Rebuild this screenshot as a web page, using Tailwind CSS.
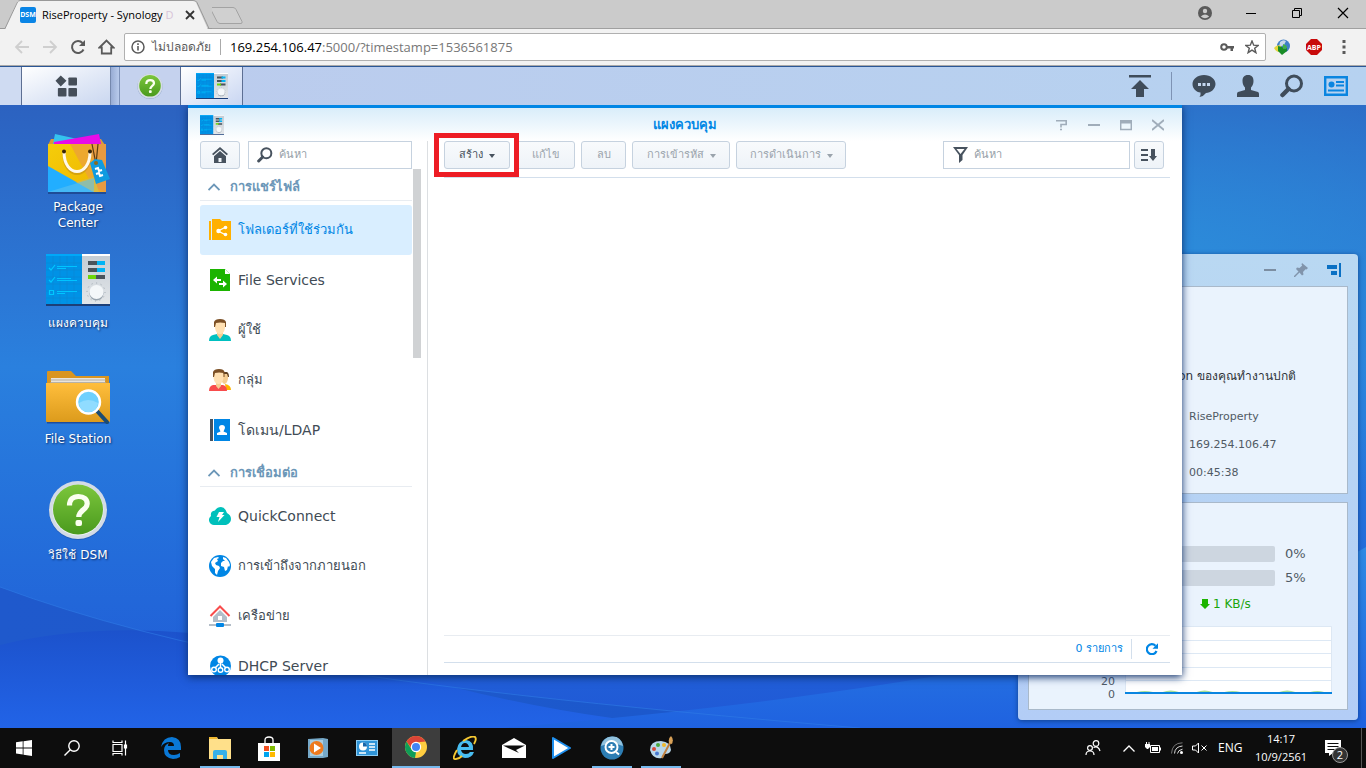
<!DOCTYPE html>
<html lang="th">
<head>
  <meta charset="UTF-8" />
  <title>RiseProperty - Synology DiskStation</title>
  <meta name="viewport" content="width=device-width, initial-scale=1.0" />
  <script src="https://cdn.jsdelivr.net/npm/@tailwindcss/browser@4"></script>
</head>
<body class="flex flex-col h-screen overflow-hidden font-['DejaVu_Sans',sans-serif] text-[#414b55]">

  <!-- Shared icons -->
  <svg class="absolute w-0 h-0">
    <defs>
      <linearGradient id="gGreen" x1="0" y1="0" x2="0" y2="1"><stop offset="0" stop-color="#7cc63c" /><stop offset="1" stop-color="#4a9a1e" /></linearGradient>
      <linearGradient id="gFolder" x1="0" y1="0" x2="0" y2="1"><stop offset="0" stop-color="#ffbe3c" /><stop offset="1" stop-color="#dc9b1c" /></linearGradient>
      <linearGradient id="gPanel" x1="0" y1="0" x2="0" y2="1"><stop offset="0" stop-color="#c3ccd4" /><stop offset="1" stop-color="#e3e6e9" /></linearGradient>
      <linearGradient id="gBag" x1="0" y1="0" x2="1" y2="1"><stop offset="0" stop-color="#f5cd0a" /><stop offset="1" stop-color="#eeb500" /></linearGradient>
    </defs>
    <symbol id="control" viewBox="0 0 64 52">
      <path d="M0 50h64v2H0z" fill="#1c3f78" />
      <path d="M0 0h36v50H0z" fill="#0092e6" />
      <path d="M0 0h36v2H0z" fill="#00a8f8" />
      <path d="M7 2v48M14 2v48M21 2v48M28 2v48M0 9h36M0 16h36M0 23h36M0 30h36M0 37h36M0 44h36" stroke="#0a86d4" stroke-width=".6" />
      <path d="M36 0h28v50H36z" fill="url(#gPanel)" />
      <path d="M36 0h28v2H36z" fill="#fff" />
      <path d="M3 14l2 2 4-5M3 26l2 2 4-5M3.500 36.500h4v4h-4z" stroke="#00c8ff" stroke-width="1.200" fill="none" />
      <path d="M11 12.500h20M11 14.500h9M11 24.500h14M11 26.500h20M11 37.500h20M11 39.500h8" stroke="#00c4ff" stroke-width="1.100" />
      <path d="M42 7h12v4H42zM42 14h12v4H42zM48 21h11v4H48z" fill="#4a535b" />
      <path d="M51 7h8v4h-8zM51 14h8v4h-8z" fill="#00b4f5" /><path d="M42 21h8v4h-8z" fill="#6ed60a" />
      <circle cx="50" cy="38" r="9" fill="none" stroke="#9aa5ae" stroke-width="1" stroke-dasharray="1 3.700" />
      <circle cx="50.500" cy="39.500" r="7" fill="#97a3ad" /><circle cx="50.500" cy="38" r="7" fill="#f4f7f9" />
    </symbol>
    <symbol id="help" viewBox="0 0 60 60">
      <circle cx="30" cy="31" r="29" fill="#1b458f" opacity=".4" />
      <circle cx="30" cy="30" r="29" fill="#d3dbe6" /><circle cx="30" cy="30" r="25.500" fill="#eef3f3" />
      <circle cx="30" cy="29.500" r="25" fill="url(#gGreen)" />
      <path d="M21.500 25.500c0-6 3.500-9 9-9s8.700 3 8.700 7.200c0 6.300-8.400 6.100-8.400 13.300" fill="none" stroke="#fbfff0" stroke-width="5.200" />
      <rect x="27.500" y="40" width="6.500" height="6" rx="2" fill="#fbfff0" />
    </symbol>
    <symbol id="mag" viewBox="0 0 24 24">
      <circle cx="14" cy="9.500" r="7.500" fill="none" stroke="currentColor" stroke-width="3" /><path d="M8.500 15l-6 6" stroke="currentColor" stroke-width="4.500" stroke-linecap="round" />
    </symbol>
    <symbol id="chev" viewBox="0 0 12 8"><path d="M0.500 7L6 1.500 11.500 7" fill="none" stroke="currentColor" stroke-width="1.800" /></symbol>
    <symbol id="caret" viewBox="0 0 6 4"><path d="M0 0h6L3 4z" fill="currentColor" /></symbol>
  </svg>

  <!-- Browser tab strip -->
  <header class="shrink-0 bg-[#f2f2f2] font-['Open_Sans',sans-serif] text-black">
    <div class="flex h-[29px] bg-[#cbcbcb] border-b border-[#a0a0a0]">
      <div class="relative w-[212px] h-[29px] flex items-center pl-5 pr-4 gap-[6px]">
        <svg class="absolute inset-0 w-full h-full" viewBox="0 0 212 29"><path d="M0 29.500h5L17 2q1-1.500 3-1.500h172q3 0 4 2L208 29.500z" fill="#f2f2f2" /><path d="M0 28.500h5L17.500 2q1-1.500 3-1.500H193q3 0 4 2l12 26h3" fill="none" stroke="#999" /></svg>
        <span class="relative w-4 h-4 rounded-xs bg-[#0a85e6] text-white text-[7px] leading-4 font-bold text-center">DSM</span>
        <span class="relative flex-1 whitespace-nowrap text-[11px] leading-4">RiseProperty - Synology <span class="text-[#d8c4d8]">D</span></span>
        <button aria-label="Close tab" class="relative w-3 h-3"><svg viewBox="0 0 12 12"><path d="M2 2l8 8M10 2l-8 8" stroke="#333" stroke-width="1.800" /></svg></button>
      </div>
      <button aria-label="New tab" class="w-9 h-7"><svg viewBox="0 0 36 28"><path d="M-2 7.500h23q2 0 3 2l6 12q.5 2-1 2H8q-2 0-3-2L-2 8z" fill="#d0d0d0" stroke="#a3a3a3" /></svg></button>
      <div class="flex-1"></div>
      <svg class="w-[14px] h-[14px] mt-[6px]" viewBox="0 0 14 14"><circle cx="7" cy="7" r="7" fill="#5a5a5a" /><circle cx="7" cy="5" r="2.200" fill="#cbcbcb" /><path d="M2.800 10.500q4.200-4 8.400 0-4.200 3.500-8.400 0z" fill="#cbcbcb" /></svg>
      <div class="flex ml-4">
        <button aria-label="Minimize" class="w-[46px] h-[26px] flex items-center justify-center"><svg class="w-3 h-3" viewBox="0 0 12 12"><path d="M1 6.500h10" stroke="#000" /></svg></button>
        <button aria-label="Restore" class="w-[46px] h-[26px] flex items-center justify-center"><svg class="w-3 h-3" viewBox="0 0 12 12"><path d="M1.500 3.500h7v7h-7zM3.500 3V1.500h7v7H9" fill="none" stroke="#000" /></svg></button>
        <button aria-label="Close" class="w-[46px] h-[26px] flex items-center justify-center"><svg class="w-3 h-3" viewBox="0 0 12 12"><path d="M1 1l10 10M11 1L1 11" stroke="#000" stroke-width="1.200" /></svg></button>
      </div>
    </div>

    <!-- Address bar -->
    <div class="flex items-center h-[37px] pl-[14px] pr-5 border-b border-[#a9a9a9]">
      <div class="flex items-center gap-3 mr-[9px]">
        <svg class="w-4 h-4" viewBox="0 0 16 16"><path d="M15 8H2M8 2L2 8l6 6" fill="none" stroke="#cfcfcf" stroke-width="1.800" /></svg>
        <svg class="w-4 h-4" viewBox="0 0 16 16"><path d="M1 8h13M8 2l6 6-6 6" fill="none" stroke="#cfcfcf" stroke-width="1.800" /></svg>
        <svg class="w-4 h-4" viewBox="0 0 16 16"><path d="M13.500 10.500A6 6 0 1 1 12.500 4" fill="none" stroke="#5a5a5a" stroke-width="2" /><path d="M15 1v6H9z" fill="#5a5a5a" /></svg>
        <svg class="w-[17px] h-4" viewBox="0 0 17 16"><path d="M1.500 8.500l7-7 7 7h-2.300V14.500H3.800V8.500z" fill="none" stroke="#5a5a5a" stroke-width="1.800" /></svg>
      </div>
      <div class="flex-1 flex items-center h-7 px-[6px] bg-white border border-[#b0b0b0] rounded-xs text-[13px] leading-5">
        <svg class="w-[14px] h-[14px] shrink-0" viewBox="0 0 14 14"><circle cx="7" cy="7" r="6" fill="none" stroke="#5a5a5a" stroke-width="1.500" /><path d="M7 6v4.500M7 3.300V5" stroke="#5a5a5a" stroke-width="1.600" /></svg>
        <span class="ml-[7px] w-[59px] text-[12px] text-[#5a5a5a] whitespace-nowrap">ไม่ปลอดภัย</span>
        <span class="mx-[9px] w-px h-4 bg-[#aaa]"></span>
        <span class="flex-1 text-[#777] whitespace-nowrap"><span class="text-black">169.254.106.47</span>:5000/?timestamp=1536561875</span>
        <svg class="w-[14px] h-3 mr-[11px]" viewBox="0 0 14 12"><path d="M7 5h7v2.500h-1V10h-2.500V7.500H7z" fill="#5a5a5a" /><circle cx="4" cy="6" r="2.800" fill="none" stroke="#5a5a5a" stroke-width="2" /></svg>
        <svg class="w-[14px] h-[14px]" viewBox="0 0 14 14"><path d="M7 1l1.700 4.200 4.500.300-3.500 2.800 1.200 4.400L7 10.200l-3.900 2.500 1.200-4.400L.8 5.500l4.500-.3z" fill="none" stroke="#5a5a5a" stroke-width="1.400" /></svg>
      </div>
      <svg class="w-4 h-4 ml-2" viewBox="0 0 16 16"><circle cx="9.500" cy="7" r="6.500" fill="#3f7fc8" /><path d="M6 3q3-3 6-1l-2 4-5 2z" fill="#c9d8ea" /><path d="M0 9q3-4 7-2l2 5q-6 3-9-3z" fill="#e3d63c" /><path d="M4 7l4 1 3 2 2-1v3l-5 4-4-4z" fill="#188c26" /><path d="M9 5q4 1 4 4l-4 1z" fill="#40b04a" /></svg>
      <svg class="w-4 h-4 ml-4" viewBox="0 0 16 16"><path d="M5 0h6l5 5v6l-5 5H5l-5-5V5z" fill="#c80a0a" /><text x="8" y="11" font-size="7" font-weight="700" text-anchor="middle" fill="#fff">ABP</text></svg>
      <svg class="w-1 h-[14px] ml-5" viewBox="0 0 4 14"><path d="M.5 0h3v3h-3zM.5 5.500h3v3h-3zM.5 11h3v3h-3z" fill="#5a5a5a" /></svg>
    </div>
  </header>

  <!-- DSM taskbar -->
  <nav class="relative z-10 shrink-0 flex h-[39px] border-t border-[#2b5796] bg-linear-to-r from-[#bccbed] to-[#b6d2f0]">
    <div class="w-[22px] bg-[#cfdbf2] border-r border-[#5d6f93]"></div>
    <button aria-label="Main menu" class="w-[89px] flex items-center justify-center bg-linear-to-br from-white via-[#e3eaf7] to-[#cad7f0] border-r border-[#7588ad]">
      <svg class="w-[22px] h-[22px]" viewBox="-1 0 23 22" fill="#454e59"><path d="M5 0l6 5.500-6 6L-.5 5.500z" /><rect x="13" y="2" width="9" height="8.500" rx="1" /><rect x="2" y="13" width="9" height="9" rx="1" /><rect x="13" y="13" width="9" height="9" rx="1" /></svg>
    </button>
    <div class="w-2 bg-linear-to-r from-[#98acd4] to-[#b9cbec]"></div>
    <button aria-label="Help" class="w-[62px] flex items-center justify-center bg-[#c5d2ee] border-x border-l-[#7f93ba] border-r-[#5d6f93]"><svg class="w-[26px] h-[26px]"><use href="#help" /></svg></button>
    <button aria-label="Control panel" class="w-[62px] flex items-center justify-center bg-linear-to-br from-white to-[#c9d6f2] border-r border-[#5d6f93]"><svg class="w-8 h-[26px]"><use href="#control" /></svg></button>
    <div class="flex-1"></div>
    <div class="flex items-center pr-[18px] text-[#3f4c5a]">
      <svg class="w-[22px] h-[22px]" viewBox="0 0 22 22" fill="currentColor"><path d="M0 0h22v2.500H0zM11 5l9 9h-5v8H7v-8H2z" /></svg>
      <span class="w-px h-7 ml-5 mr-5 bg-[#7e93b4]"></span>
      <div class="flex items-center gap-5">
        <svg class="w-6 h-[22px]" viewBox="0 0 24 22"><path d="M12 0c6.500 0 11.500 4 11.500 9S18.500 18 14 18q-2 3-6.500 4 1.500-2 1-4.400C4 17 .5 13.500.5 9 .5 4 5.500 0 12 0z" fill="currentColor" /><path d="M6 8h3v3H6zM10.500 8h3v3h-3zM15 8h3v3h-3z" fill="#c4d7ef" /></svg>
        <svg class="w-6 h-[22px]" viewBox="0 0 24 22" fill="currentColor"><path d="M12 0c4 0 5.500 2.500 5.500 6 0 3-1 5-2.500 6.500v2.500l7 2q1 .5 1 2V22H1v-3q0-1.500 1-2l7-2v-2.500C7.500 11 6.500 9 6.500 6c0-3.500 1.500-6 5.500-6z" /></svg>
        <svg class="w-6 h-6"><use href="#mag" /></svg>
        <svg class="w-6 h-5" viewBox="0 0 24 20"><path d="M1.200 1.200h21.600v17.600H1.200z" fill="none" stroke="#0a85e0" stroke-width="2.400" /><circle cx="7.500" cy="8.500" r="3" fill="#0a85e0" /><path d="M12 6h8M12 9.500h8M4 14.500h16" stroke="#0a85e0" stroke-width="2" /></svg>
      </div>
    </div>
  </nav>

  <!-- Desktop -->
  <main class="relative flex-1 min-h-0 bg-linear-to-b from-[#2c62c0] via-[#2a80de] via-42% to-[#2058d6]">
    <svg class="absolute inset-0 w-full h-full" viewBox="0 0 1366 623" preserveAspectRatio="none">
      <defs>
        <radialGradient id="glow" cx=".85" cy=".25" r=".4"><stop offset="0" stop-color="#2c8cda" /><stop offset="1" stop-color="#2c8cda" stop-opacity="0" /></radialGradient>
        <linearGradient id="w1" x1="0" y1="0" x2="1" y2="0"><stop offset="0" stop-color="#1f59cc" /><stop offset="1" stop-color="#1b58cc" /></linearGradient>
        <linearGradient id="w2" x1="0" y1="0" x2="0" y2="1"><stop offset="0" stop-color="#1c52cc" /><stop offset="1" stop-color="#2264e8" /></linearGradient>
        <linearGradient id="w3" x1="0" y1="0" x2="0" y2="1"><stop offset="0" stop-color="#2f8ae4" /><stop offset="1" stop-color="#1f62e0" /></linearGradient>
      </defs>
      <path d="M0 0h1366v623H0z" fill="url(#glow)" />
      <path d="M0 482Q130 530 300 560T860 623H0z" fill="url(#w1)" />
      <path d="M0 540Q160 500 400 568T850 623H0z" fill="url(#w2)" />
      <path d="M500 623Q1150 570 1366 442V623z" fill="url(#w3)" />
      <path d="M0 482Q130 530 300 560T860 623" fill="none" stroke="#2f7ce6" opacity=".6" />
    </svg>

    <!-- Shortcuts -->
    <ul class="absolute left-[28px] top-[27px] w-[100px] text-center text-white text-[12px] leading-4 text-shadow-[1px_1px_2px_#0a2a60]">
      <li class="h-[116px] flex flex-col items-center">
        <svg class="w-16 h-16 mb-[3px]" viewBox="0 0 64 64">
          <path d="M2 60h58v2H2z" fill="#1f4c96" />
          <path d="M5 7h50l4 6H2z" fill="#d99a38" /><path d="M9 2l18 4 24 6H7z" fill="#35c3ef" /><path d="M8 10L53 2l2 10H8z" fill="#e80ce8" />
          <path d="M2 12h58v48H2z" fill="url(#gBag)" /><path d="M24 12h36v48H50z" fill="#eda82e" /><path d="M45 12h15v48L50 56z" fill="#e79a42" />
          <path d="M2 34l46 26H2z" fill="#22aeff" /><path d="M30 50l18-5 5 15h-5z" fill="#d9ba40" /><path d="M2 60l46-14 0 14z" fill="#5cc0f0" opacity=".6" />
          <path d="M18 22c0 26 26 26 26 0" fill="none" stroke="#b98518" stroke-width="3" opacity=".5" />
          <path d="M18 20c0 26 26 26 26 0" fill="none" stroke="#fff8ea" stroke-width="3" /><circle cx="18" cy="19.500" r="2" fill="#3a2508" /><circle cx="44" cy="19.500" r="2" fill="#3a2508" />
          <path d="M46 12l4 20 2-20" fill="none" stroke="#5a3c10" stroke-width="1.200" />
          <path d="M44 31l5-4 7 1 8 19-14 5z" fill="#0f9be0" /><circle cx="50" cy="31" r="2" fill="#8a6a20" /><path d="M49 37l3-1 1 3 3-1M50 42l3-1 1 3 3-1" stroke="#fff" stroke-width="2" fill="none" />
        </svg>
        <a href="#package">Package<br />Center</a>
      </li>
      <li class="h-[116px] flex flex-col items-center"><svg class="w-16 h-[52px] mt-[6px] mb-[9px]"><use href="#control" /></svg><a href="#control-panel">แผงควบคุม</a></li>
      <li class="h-[116px] flex flex-col items-center">
        <svg class="w-16 h-[54px] mt-[6px] mb-[7px]" viewBox="0 0 64 54">
          <path d="M1 52h62v1.500H1z" fill="#1d4c9d" /><path d="M1 14V2q0-1 1-1h23l5 5h33v10z" fill="#d99520" />
          <path d="M5 8h54v6H5z" fill="#e9e4dc" /><path d="M4 10h56M4 12.500h56" stroke="#aaa395" stroke-width=".8" />
          <path d="M0 13h64v38q0 1-1 1H1q-1 0-1-1z" fill="url(#gFolder)" />
          <path d="M51 41l10 11" stroke="#1c4c72" stroke-width="4" stroke-linecap="round" />
          <circle cx="42.500" cy="32" r="11.500" fill="#6fd0fd" stroke="#fff" stroke-width="2.400" /><path d="M33 33q9-6 19 0-1 9-9.500 9T33 33z" fill="#90dcff" />
        </svg>
        <a href="#file-station">File Station</a>
      </li>
      <li class="h-[116px] flex flex-col items-center"><svg class="w-[60px] h-[60px] mb-[7px]"><use href="#help" /></svg><a href="#help-dsm">วิธีใช้ DSM</a></li>
    </ul>

    <!-- Widgets -->
    <aside class="absolute right-2 top-[149px] bottom-2 w-[340px] flex flex-col px-[10px] pb-[10px] rounded-sm bg-linear-to-b from-[#b9d8f2] to-[#b3cdf6] shadow-[0_1px_5px_#10408c]">
      <div class="flex items-center justify-end gap-[18px] h-8 pr-[6px]">
        <svg class="w-3 h-2" viewBox="0 0 12 8"><path d="M0 3h12v2H0z" fill="#7c8ea2" /></svg>
        <svg class="w-[14px] h-[14px]" viewBox="0 0 14 14" fill="#8194ab"><path d="M8 0l6 5-1.500 1.500-1-.2L9 9l.5 2.500L8 12.500 5.500 9.500 1 14H0v-1l4.500-4.500L2 6l1-1.500L5.500 5l2.700-2.500-.7-1z" /></svg>
        <svg class="w-4 h-[14px]" viewBox="0 0 16 14" fill="#0a70c4"><path d="M13 0h2v14h-2zM1 2h10v4H1zM5 8h6v4H5z" /></svg>
      </div>
      <section class="shrink-0 h-[208px] bg-[#eaf3fd] border border-[#a9b9ca] pt-[81px]">
        <p class="text-right pr-[51px] text-[12px] leading-4 text-[#2f3439]">DiskStation ของคุณทำงานปกติ</p>
        <dl class="pl-40 pt-[19px] text-[11px] leading-7 text-[#505a64]">
          <dd>RiseProperty</dd>
          <dd>169.254.106.47</dd>
          <dd>00:45:38</dd>
        </dl>
      </section>
      <section class="flex-1 mt-2 bg-[#eaf3fd] border border-[#a9b9ca] pt-[39px] text-[13px] text-[#505a64]">
        <div class="flex items-center h-6 gap-[10px] pl-[100px] pr-[30px]"><span class="flex-1 h-4 rounded-xs bg-[#cdd6e0]"></span><span class="w-8">0%</span></div>
        <div class="flex items-center h-6 gap-[10px] pl-[100px] pr-[30px]"><span class="flex-1 h-4 rounded-xs bg-[#cdd6e0]"></span><span class="w-8">5%</span></div>
        <div class="flex items-center h-7 pl-[171px] gap-[3px] text-[12px] text-[#1aa50a]"><svg class="w-[10px] h-[10px]" viewBox="0 0 10 10" fill="#1cb400"><path d="M2 0h6v5h2l-5 5-5-5h2z" /></svg>1 KB/s</div>
        <div class="flex mt-2 pl-[60px] pr-[15px]">
          <div class="w-[26px] text-right text-[11px] leading-[13px] pt-[49px]">20<br />0</div>
          <svg class="ml-[10px] flex-1 h-[68px]" viewBox="0 0 208 68" preserveAspectRatio="none">
            <path d="M.5 .5h207v67H.5z" fill="#fff" stroke="#dde8f4" /><path d="M0 14.500h208M0 27.500h208M0 41.500h208M0 54.500h208" stroke="#dde8f4" />
            <path d="M12 66q8-2 16 0zM38 66q8-3 16 0zM72 66q8-3 16 0zM100 66q8-2 16 0zM155 66q8-3 16 0zM186 66q8-2 14 0z" fill="#a6dc96" /><path d="M0 66h208v2H0z" fill="#0a85e0" />
          </svg>
        </div>
      </section>
    </aside>

    <!-- Control panel window -->
    <section class="absolute left-[188px] top-0 w-[994px] h-[570px] flex flex-col bg-white border-t-3 border-[#0086e5] shadow-[0_2px_8px_#0b2f6b]">
      <div class="shrink-0 flex items-center h-[33px] px-3 bg-linear-to-b from-[#d9edfa] to-white">
        <svg class="w-6 h-5"><use href="#control" /></svg>
        <h1 class="flex-1 text-center text-[13px] leading-4 font-bold text-[#0086e5] pl-[90px]">แผงควบคุม</h1>
        <div class="flex items-center gap-5 pr-[6px] text-[#a0adba]">
          <button aria-label="Help" class="w-3 h-3"><svg viewBox="0 0 12 12"><path d="M0 1.800h10.200v3.700H5v3M4 10.500h2" fill="none" stroke="currentColor" stroke-width="1.600" /></svg></button>
          <button aria-label="Minimize" class="w-3 h-3"><svg viewBox="0 0 12 12"><path d="M0 6h12" stroke="currentColor" stroke-width="2" /></svg></button>
          <button aria-label="Maximize" class="w-3 h-3"><svg viewBox="0 0 12 12"><path d="M.7 2h10.600v8.500H.7z" fill="none" stroke="currentColor" stroke-width="1.500" /><path d="M0 1h12v3.500H0z" fill="currentColor" /></svg></button>
          <button aria-label="Close" class="w-3 h-3"><svg viewBox="0 0 12 12"><path d="M0 1l12 10M12 1L0 11" stroke="currentColor" stroke-width="1.800" /></svg></button>
        </div>
      </div>

      <div class="flex flex-1 min-h-0">
        <!-- Sidebar -->
        <div class="relative w-[240px] shrink-0 flex flex-col pl-3 pr-[15px] border-r border-[#dcdfe2]">
          <div class="shrink-0 flex gap-2">
            <button aria-label="Home" class="w-10 h-7 flex items-center justify-center rounded-[3px] border border-[#c6d2df] bg-linear-to-b from-[#f8fafc] to-[#eef3f8]"><svg class="w-4 h-4" viewBox="0 0 16 16" fill="#47525e"><path d="M8 0l8 7-1.300 1.300L8 2.500 1.300 8.300 0 7z" /><path d="M8 4l6 5.300V16H2V9.300zM6.500 11v4h3v-4z" fill-rule="evenodd" /></svg></button>
            <label class="flex-1 flex items-center h-7 pl-2 gap-[6px] border border-[#c6d2df] text-[#47525e]"><svg class="w-4 h-4 shrink-0"><use href="#mag" /></svg><input type="text" placeholder="ค้นหา" aria-label="ค้นหา" class="w-full min-w-0 text-[11px] leading-4 outline-none placeholder:text-[#969fa8]" /></label>
          </div>
          <div class="flex-1 min-h-0 overflow-hidden text-[13px]">
            <h2 class="flex items-center gap-[10px] h-8 mb-1 pt-1 pl-2 border-b border-[#e8ecf1] font-bold text-[#6c97b8]"><svg class="w-3 h-2"><use href="#chev" /></svg>การแชร์ไฟล์</h2>
            <ul>
              <li><a href="#shared" class="flex items-center gap-[7px] h-[50px] pl-[9px] rounded-[3px] bg-[#d9eeff] text-[#0086e5]"><svg class="w-[22px] h-[22px]" viewBox="0 0 22 22"><path d="M0 2h2v19H0z" fill="#ffb000" /><path d="M3 0h8l2 2h9v19H3z" fill="#ffb000" /><path d="M17 8l-8 4 8 4" fill="none" stroke="#fff" stroke-width="1.300" /><circle cx="9.500" cy="12" r="2.200" fill="#fff" /><circle cx="16.500" cy="8.500" r="1.800" fill="#fff" /><circle cx="16.500" cy="15.500" r="1.800" fill="#fff" /></svg>โฟลเดอร์ที่ใช้ร่วมกัน</a></li>
              <li><a href="#file-services" class="flex items-center gap-[7px] h-[50px] pl-[9px] text-[14px]"><svg class="w-[22px] h-[22px]" viewBox="0 0 22 22"><path d="M1 0h15l5 5v17H1z" fill="#1cb400" /><path d="M16 0v5h5z" fill="#fff" /><path d="M12 11H7M10 15h5" stroke="#fff" stroke-width="1.800" /><path d="M8 7.500v7L4 11zM14 11.500v7l4-3.500z" fill="#fff" /></svg>File Services</a></li>
              <li><a href="#user" class="flex items-center gap-[7px] h-[50px] pl-[9px]"><svg class="w-[22px] h-[22px]" viewBox="0 0 22 22"><path d="M0 22q0-5 4-6l4-1h6l4 1q4 1 4 6z" fill="#00c0c0" /><path d="M8 12h6v4l-3 4-3-4z" fill="#f5cd92" /><path d="M6 3h10v6q-1 6-5 6t-5-6z" fill="#ffe0b2" /><path d="M5 8V3q1-3 6-3t6 3v5h-1V4Q11 3 7 4L6 8z" fill="#7c5026" /></svg>ผู้ใช้</a></li>
              <li><a href="#group" class="flex items-center gap-[7px] h-[50px] pl-[9px]"><svg class="w-[22px] h-[22px]" viewBox="0 0 22 22"><path d="M16 15q6 1 6 6h-5z" fill="#ffb400" /><path d="M13 4h6v6q-1 5-4 5l-2-2z" fill="#f5cd92" /><path d="M13 3h5q2 1 2 5h-1l-1-3h-5z" fill="#5e4023" /><path d="M0 22q0-5 4-6h10q4 1 4 6z" fill="#f84c4c" /><path d="M7 13h5v4l-2.500 3L7 17z" fill="#f5cd92" /><path d="M4.500 3h10v6q-1 6-5 6t-5-6z" fill="#ffe0b2" /><path d="M4 8V3q1-3 6-3t5.500 3v5h-1V4Q10 3 6 4L5 8z" fill="#7c5026" /></svg>กลุ่ม</a></li>
              <li><a href="#ldap" class="flex items-center gap-[7px] h-[50px] pl-[9px] text-[14px]"><svg class="w-[22px] h-[22px]" viewBox="0 0 22 22"><path d="M1 0h3v22H1z" fill="#47525e" /><path d="M5 0h16v22H5z" fill="#0086e5" /><path d="M13 6q3 0 3 3l-1.500 3.500L18 14v2H8v-2l3.500-1.500L10 9q0-3 3-3z" fill="#fff" /></svg>โดเมน/LDAP</a></li>
            </ul>
            <h2 class="flex items-center gap-[10px] h-8 mb-1 pt-1 pl-2 border-b border-[#e8ecf1] font-bold text-[#6c97b8]"><svg class="w-3 h-2"><use href="#chev" /></svg>การเชื่อมต่อ</h2>
            <ul>
              <li><a href="#quickconnect" class="flex items-center gap-[7px] h-[50px] pl-[9px] text-[14px]"><svg class="w-[22px] h-[18px]" viewBox="0 0 22 18"><path d="M5 18a5 5 0 0 1-3-9q-1-5 4-5.500Q8 0 12 0t6 6q4 2 4 6t-5 6z" fill="#00c0bb" /><path d="M10 5h5l-2 3h2.500L9 15l1.500-5H7.500z" fill="#fff" /></svg>QuickConnect</a></li>
              <li><a href="#external" class="flex items-center gap-[7px] h-[50px] pl-[9px]"><svg class="w-[22px] h-[22px]" viewBox="0 0 22 22"><circle cx="11" cy="11" r="11" fill="#0086e5" /><path d="M2 7l3-4 4-1 1 1-2 1 1 2-3 2 1 2 3 1 1 2-2 3-1 4-2-2v-4l-3-3zM14 2l3 1 3 4 1 3-1 2-1-1-1 4-2 1-1-4-3-1v-3l2-2 2 0-2-2z" fill="#fff" /></svg>การเข้าถึงจากภายนอก</a></li>
              <li><a href="#network" class="flex items-center gap-[7px] h-[50px] pl-[9px]"><svg class="w-[22px] h-[22px]" viewBox="0 0 22 22"><path d="M11 5l7 7v5H4v-5z" fill="#b2bdc8" /><path d="M9 11h4v4H9z" fill="#fff" /><path d="M1.500 11L11 1.500l9.500 9.500" fill="none" stroke="#f84c4c" stroke-width="2" /><path d="M0 19h22v2H0z" fill="#b2bdc8" /><rect x="7" y="18" width="8" height="4" rx="1" fill="#0086e5" /></svg>เครือข่าย</a></li>
              <li><a href="#dhcp" class="flex items-center gap-[7px] h-[50px] pl-[9px] text-[14px]"><svg class="w-[22px] h-[22px]" viewBox="0 0 22 22"><circle cx="11.500" cy="11" r="10.500" fill="#0086e5" /><path d="M11.500 6v9M10 9l-5 5M13 9l5 5" stroke="#fff" stroke-width="1.500" /><circle cx="11.500" cy="5.500" r="3" fill="#fff" /><g fill="#0086e5" stroke="#fff" stroke-width="1.400"><circle cx="5" cy="14.500" r="2.300" /><circle cx="11.500" cy="15" r="2.300" /><circle cx="18" cy="14.500" r="2.300" /></g></svg>DHCP Server</a></li>
            </ul>
          </div>
          <div class="absolute right-[6px] top-7 w-2 h-[189px] bg-[#d0d2d4]"></div>
        </div>

        <!-- Content -->
        <div class="flex-1 flex flex-col pl-4 pr-3 pb-3 text-[11px]">
          <div class="flex gap-[6px] pb-2 pr-[6px] border-b border-[#d3dfec]">
            <div class="relative">
              <button class="flex items-center justify-center gap-[6px] w-[66px] h-7 pt-px rounded-[3px] border border-[#c6d2df] bg-linear-to-b from-[#f8fafc] to-[#eef3f8] text-[#47525e]">สร้าง<svg class="w-[6px] h-1"><use href="#caret" /></svg></button>
              <div class="absolute -left-[10px] -top-2 w-[85px] h-11 border-5 border-[#ed1c24]"></div>
            </div>
            <button class="w-[59px] h-7 pt-px rounded-[3px] border border-[#c6d2df] bg-linear-to-b from-[#f8fafc] to-[#eef3f8] text-[#9aa3ac]">แก้ไข</button>
            <button class="w-[45px] h-7 pt-px rounded-[3px] border border-[#c6d2df] bg-linear-to-b from-[#f8fafc] to-[#eef3f8] text-[#9aa3ac]">ลบ</button>
            <button class="flex items-center justify-center gap-[6px] w-[98px] h-7 pt-px rounded-[3px] border border-[#c6d2df] bg-linear-to-b from-[#f8fafc] to-[#eef3f8] text-[#9aa3ac]">การเข้ารหัส<svg class="w-[6px] h-1"><use href="#caret" /></svg></button>
            <button class="flex items-center justify-center gap-[6px] w-[110px] h-7 pt-px rounded-[3px] border border-[#c6d2df] bg-linear-to-b from-[#f8fafc] to-[#eef3f8] text-[#9aa3ac]">การดำเนินการ<svg class="w-[6px] h-1"><use href="#caret" /></svg></button>
            <label class="ml-auto flex items-center w-[187px] h-7 pl-[9px] gap-[6px] border border-[#c6d2df]"><svg class="w-[15px] h-4 shrink-0" viewBox="0 0 15 16"><path d="M0 0h15L9.500 8v5L6 16V8zM3.500 2L7.500 7l4-5z" fill="#47525e" fill-rule="evenodd" /></svg><input type="text" placeholder="ค้นหา" aria-label="กรอง" class="w-full min-w-0 leading-4 outline-none placeholder:text-[#969fa8]" /></label>
            <button aria-label="Sort" class="-ml-[2px] w-[30px] h-7 flex items-center justify-center rounded-[3px] border border-[#c6d2df] bg-linear-to-b from-[#f8fafc] to-[#eef3f8]"><svg class="w-4 h-3" viewBox="0 0 16 12" fill="#47525e"><path d="M0 0h7v2H0zM0 5h7v2H0zM0 10h7v2H0zM10 0h4v7h2l-4 5-4-5h2z" /></svg></button>
          </div>
          <div class="flex-1"></div>
          <div class="flex items-center justify-end h-7 pr-3 border-y border-t-[#e8ecf1] border-b-[#d3dfec] text-[#0086e5]">
            <span>0 รายการ</span>
            <span class="w-px h-5 mx-2 bg-[#d3dfec]"></span>
            <button aria-label="Refresh" class="w-[14px] h-3 ml-1 flex justify-end"><svg class="w-3 h-3" viewBox="0 0 12 12"><path d="M10.500 8A5 5 0 1 1 9.500 2.800" fill="none" stroke="currentColor" stroke-width="2.200" /><path d="M12 .3v5.500H6.500z" fill="currentColor" /></svg></button>
          </div>
        </div>
      </div>
    </section>
  </main>

  <!-- Windows taskbar -->
  <footer class="relative z-10 shrink-0 flex h-10 bg-[#0d0d0d] text-white font-['Open_Sans',sans-serif]">
    <div class="flex">
      <button aria-label="Start" class="w-12 flex items-center justify-center"><svg class="w-4 h-4" viewBox="0 0 16 16" fill="#fff"><path d="M0 2.300l6.700-1v6.200H0zM7.500 1.200L16 0v7.500H7.500zM0 8.400h6.700v6.200l-6.700-1zM7.500 8.400H16V16l-8.500-1.200z" /></svg></button>
      <button aria-label="Search" class="w-12 flex items-center justify-center"><svg class="w-4 h-4" viewBox="0 0 16 16" fill="none" stroke="#fff" stroke-width="1.400"><circle cx="10" cy="6" r="5.200" /><path d="M6.300 9.700L.5 15.500" /></svg></button>
      <button aria-label="Task view" class="w-12 flex items-center justify-center"><svg class="w-4 h-4" viewBox="0 0 16 16" fill="none" stroke="#fff" stroke-width="1.200"><path d="M1 4.500h9v7H1zM1 .5v2h9v-2M1 15.500v-2h9v2M13.500.5v15" /><path d="M12.500 5h2v3h-2z" fill="#fff" /></svg></button>
    </div>
    <div class="flex gap-px ml-[3px]">
      <button aria-label="Edge" class="w-12 flex items-center justify-center"><svg class="w-5 h-[22px]" viewBox="0 0 20 22"><path d="M0 10Q2 0 11 0q9 1 9 10v3H7q0 5 6 5 3 0 6-2v4q-3 2-7 2-9-1-9-9 0-5 5-7-1 1-1 3h6q0-4-4-4Q3 5 0 10z" fill="#0a78d6" /></svg></button>
      <button aria-label="File Explorer" class="w-12 flex items-center justify-center bg-[linear-gradient(#76b9ed,#76b9ed)] bg-[length:40px_2px] bg-bottom bg-no-repeat"><svg class="w-[22px] h-[22px]" viewBox="0 0 22 22"><path d="M0 0h8l1 2h13v20H0z" fill="#ffe08a" /><path d="M0 0h8v2H0z" fill="#f0b830" /><path d="M4 22v-7q0-2 2-2h10q2 0 2 2v7h-4v-4H8v4z" fill="#38b0e8" /></svg></button>
      <button aria-label="Store" class="w-12 flex items-center justify-center"><svg class="w-6 h-[25px]" viewBox="0 0 24 25"><path d="M8 9V4q0-3 4-3t4 3v5" fill="none" stroke="#fff" stroke-width="1.300" /><path d="M1 7h22v18H1z" fill="#fff" /><path d="M7 10h5v5H7z" fill="#f25022" /><path d="M13 10h5v5h-5z" fill="#7fba00" /><path d="M7 16h5v5H7z" fill="#00a4ef" /><path d="M13 16h5v5h-5z" fill="#ffb900" /></svg></button>
      <button aria-label="Media Player" class="w-12 flex items-center justify-center"><svg class="w-5 h-5" viewBox="0 0 20 20"><path d="M0 1l15-1 5 1v18l-5 1H0z" fill="#75a8c8" /><path d="M2 2h13v16H2z" fill="#a9cde0" /><circle cx="8.500" cy="10" r="7" fill="#ee7a1e" /><path d="M6 5.500l7 4.500-7 4.500z" fill="#fff" /></svg></button>
      <button aria-label="Control Panel" class="w-12 flex items-center justify-center"><svg class="w-[22px] h-4" viewBox="0 0 22 16"><path d="M0 0h22v16H0z" fill="#8ccdf2" /><path d="M1 1h20v14H1z" fill="#2f94d8" /><circle cx="7" cy="6.500" r="4" fill="#fff" /><path d="M7 6.500v-4a4 4 0 0 1 4 4z" fill="#1866aa" /><path d="M13 4h6M13 7h6M13 10h6M3 13h7" stroke="#fff" stroke-width="1.500" /></svg></button>
      <button aria-label="Chrome" class="w-12 flex items-center justify-center bg-[#3d3d3d] border-b-2 border-[#76b9ed]"><svg class="w-[22px] h-[22px]" viewBox="0 0 22 22"><circle cx="11" cy="11" r="11" fill="#ffcd40" /><path d="M1.500 5.500A11 11 0 0 1 20.500 5.500L11 6.500l-3 8z" fill="#db4437" /><path d="M1.500 5.500L6.700 13.500l4.300 2.500-1 6A11 11 0 0 1 1.500 5.500z" fill="#0f9d58" /><circle cx="11" cy="11" r="5.200" fill="#fff" /><circle cx="11" cy="11" r="4" fill="#4285f4" /></svg></button>
      <button aria-label="Internet Explorer" class="w-12 flex items-center justify-center"><svg class="w-6 h-6" viewBox="0 0 24 24"><path d="M20 14H8q1 4 5 4 3 0 4-2h4q-2 6-9 6-8-1-8-9 1-8 9-9 8 1 7 10zM8 11h8q-1-4-4-4-3 0-4 4z" fill="#48bdf0" fill-rule="evenodd" /><path d="M4 14Q-2 24 3 23q3 0 6-3M10 5q9-6 12-4 2 2-1 7" fill="none" stroke="#f5c832" stroke-width="1.900" /></svg></button>
      <button aria-label="Mail" class="w-12 flex items-center justify-center"><svg class="w-6 h-5" viewBox="0 0 24 20"><path d="M12 0l12 7v13H0V7z" fill="#fff" /><path d="M1 7.500h22L14 12l3 3-11-5z" fill="#0d0d0d" /></svg></button>
      <button aria-label="Player" class="w-12 flex items-center justify-center pr-[5px]"><svg class="w-5 h-[22px]" viewBox="0 0 20 22"><path d="M2 1l17 10L2 21z" fill="#fff" stroke="#1e8fee" stroke-width="2" stroke-linejoin="round" /></svg></button>
      <button aria-label="Remote search" class="w-12 flex items-center justify-center bg-[linear-gradient(#76b9ed,#76b9ed)] bg-[length:40px_2px] bg-bottom bg-no-repeat"><svg class="w-6 h-6" viewBox="0 0 24 24"><circle cx="12" cy="12" r="11.500" fill="#2d7db3" /><path d="M1 10Q3 1 12 .5T23 10q-11-5-22 0z" fill="#90c0dc" /><circle cx="11.500" cy="11" r="6" fill="#2d7db3" stroke="#fff" stroke-width="2" /><path d="M11.500 8v6M8.500 11h6M16 16l3 2.500" stroke="#fff" stroke-width="2" /></svg></button>
      <button aria-label="Paint" class="w-12 flex items-center justify-center bg-[linear-gradient(#76b9ed,#76b9ed)] bg-[length:40px_2px] bg-bottom bg-no-repeat"><svg class="w-6 h-6" viewBox="0 0 24 24"><path d="M1 14Q1 5 12 5q10 1 10 9-1 4-6 4-3 1-3 4-9 2-12-8z" fill="#b9d7ea" /><circle cx="5" cy="13" r="2" fill="#d84a3a" /><circle cx="9" cy="9" r="2" fill="#4ba83e" /><circle cx="15" cy="9" r="2" fill="#f0b82c" /><circle cx="8" cy="17.500" r="2" fill="#4878d0" /><path d="M22 5l-9 17" stroke="#c08040" stroke-width="2" /><path d="M20 7q-1-5 2-7 3 3 1 8z" fill="#d9a258" /></svg></button>
    </div>
    <div class="flex-1"></div>
    <div class="flex items-center text-[12px] leading-4">
      <svg class="w-4 h-4 mr-[22px]" viewBox="0 0 16 16" fill="none" stroke="#fff" stroke-width="1.200"><circle cx="11" cy="3.500" r="2.800" /><circle cx="5" cy="8" r="2.400" /><path d="M1 15q0-4 4-4t4 4M8.500 7.500q5-2 6.500 3.500" /></svg>
      <svg class="w-3 h-[7px] mr-[10px]" viewBox="0 0 12 7"><path d="M.5 6.500L6 1l5.500 5.500" fill="none" stroke="#fff" stroke-width="1.300" /></svg>
      <svg class="w-4 h-3 mr-[10px]" viewBox="0 0 16 12"><path d="M5.500 3.500h9v7h-9z" fill="none" stroke="#fff" /><path d="M7 5h6v4H7zM15 5.500h1v3h-1zM0 2h5v3l-2 2H2L0 5zM1 0h1v2H1zM3.500 0h1v2h-1z" fill="#fff" /></svg>
      <svg class="w-3 h-3 mr-[9px]" viewBox="0 0 12 12" fill="none"><path d="M.5 11.500Q1 1 11.500.8" stroke="#777" /><path d="M3.500 11.500Q4 4.500 11.500 4M6.500 11.500Q7 8 11.500 7.200" stroke="#ddd" /><circle cx="10.500" cy="10.500" r="1.500" fill="#fff" /></svg>
      <svg class="w-[15px] h-3 mr-[11px]" viewBox="0 0 15 12" fill="none" stroke="#fff"><path d="M.5 4h3l3-3v10l-3-3h-3zM9.500 3.500l5 5M14.500 3.500l-5 5" /></svg>
      <span class="w-[25px]">ENG</span>
      <div class="ml-3 w-[52px] flex flex-col items-center leading-[18px] whitespace-nowrap text-[11px]"><span>14:17</span><span>10/9/2561</span></div>
      <div class="relative ml-[18px] w-4 h-4">
        <svg viewBox="0 0 16 16"><path d="M0 0h16v13H8l-4 3v-3H0z" fill="#fff" /><path d="M2.500 3.500h11M2.500 6.500h11M2.500 9.500h7" stroke="#0d0d0d" /></svg>
        <span class="absolute left-[7px] top-[7px] w-4 h-4 rounded-full bg-[#333] border border-[#999] text-[11px] leading-[14px] text-center">2</span>
      </div>
      <span class="ml-5 mr-1 w-px h-10 bg-[#555]"></span>
    </div>
  </footer>
</body>
</html>
